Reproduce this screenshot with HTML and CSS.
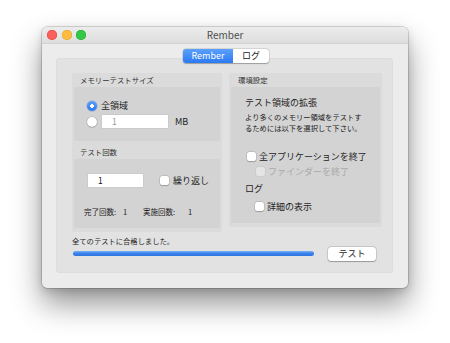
FILE: index.html
```html
<!DOCTYPE html>
<html lang="ja">
<head>
<meta charset="utf-8">
<title>Rember</title>
<link rel="stylesheet" href="styles.css">
</head>
<body>
<div class="stage">
<div class="window">
  <div class="titlebar">
    <div class="lights">
      <span class="light red"></span><span class="light yellow"></span><span class="light green"></span>
    </div>
    <div class="title">Rember</div>
    <div></div>
  </div>
  <div class="content">
    <div class="tabs">
      <span class="tab tab-main active">Rember</span><span class="tab tab-log">ログ</span>
    </div>
    <div class="panel">
      <div class="columns">
        <div class="col">
          <div class="group">
            <div class="group-label">メモリーテストサイズ</div>
            <div class="group-body size-body">
              <div class="row"><span class="radio on"></span><span class="lbl">全領域</span></div>
              <div class="row"><span class="radio"></span><span class="field field-mb">1</span><span class="unit">MB</span></div>
            </div>
          </div>
          <div class="group">
            <div class="group-label">テスト回数</div>
            <div class="group-body count-body">
              <div class="row"><span class="field field-count">1</span><span class="check repeat-check"></span><span class="lbl">繰り返し</span></div>
              <div class="stats"><span>完了回数:</span><span>1</span><span>実施回数:</span><span>1</span></div>
            </div>
          </div>
        </div>
        <div class="group env">
          <div class="group-label">環境設定</div>
          <div class="group-body env-body">
            <div class="env-title">テスト領域の拡張</div>
            <div class="env-desc">より多くのメモリー領域をテストす<br>るためには以下を選択して下さい。</div>
            <div class="row cb-row cb-quit"><span class="check"></span><span class="lbl">全アプリケーションを終了</span></div>
            <div class="row cb-row cb-finder disabled"><span class="check"></span><span class="lbl">ファインダーを終了</span></div>
            <div class="env-log">ログ</div>
            <div class="row cb-row cb-detail"><span class="check"></span><span class="lbl">詳細の表示</span></div>
          </div>
        </div>
      </div>
      <div class="status">全てのテストに合格しました。</div>
      <div class="run-row">
        <div class="progress"></div>
        <button class="btn">テスト</button>
      </div>
    </div>
  </div>
</div>
</div>
</body>
</html>
```

FILE: styles.css
```css
* { box-sizing: border-box; }
html, body { margin: 0; padding: 0; background: #fff; }
body {
  font-family: "Noto Sans CJK JP", "Noto Sans", sans-serif;
  color: #222;
}
.stage {
  width: 450px;
  height: 343px;
  padding: 27px 0 0 42px;
  background: #fff;
}
.window {
  width: 366px;
  height: 261px;
  background: #ececec;
  border-radius: 5px;
  box-shadow: 0 16px 30px rgba(0,0,0,0.42), 0 3px 8px rgba(0,0,0,0.14), 0 0 0 0.5px rgba(0,0,0,0.28);
  display: flex;
  flex-direction: column;
}
.titlebar {
  height: 17px;
  flex: none;
  display: grid;
  grid-template-columns: 1fr auto 1fr;
  align-items: center;
  background: linear-gradient(#ececec, #dedede);
  border-bottom: 1px solid #d2d2d2;
  border-radius: 5px 5px 0 0;
}
.lights { display: flex; gap: 4.5px; padding-left: 5px; }
.light { width: 10px; height: 10px; border-radius: 50%; }
.red { background: #fc605c; box-shadow: inset 0 0 0 0.5px #e0443e; }
.yellow { background: #fdbc40; box-shadow: inset 0 0 0 0.5px #dea123; }
.green { background: #34c84a; box-shadow: inset 0 0 0 0.5px #1dad2b; }
.title { font-size: 10px; line-height: 16px; color: #4d4d4d; }

.content {
  flex: 1;
  padding: 5px 15px 15px 14px;
  display: flex;
  flex-direction: column;
}
.tabs {
  align-self: center;
  margin-left: 3px;
  display: flex;
  position: relative;
  z-index: 1;
  height: 14px;
  border-radius: 3px;
  background: #fff;
  box-shadow: 0 0 0 0.5px rgba(0,0,0,0.15), 0 0.5px 1px rgba(0,0,0,0.25);
  overflow: hidden;
}
.tab { font-size: 9px; line-height: 14px; text-align: center; color: #222; }
.tab-main { width: 50px; }
.tab-log { width: 36px; }
.tab.active { background: linear-gradient(#5ba0fb, #2c7af1); color: #fff; }

.panel {
  margin-top: -5px;
  flex: 1;
  background: #e2e2e2;
  border-radius: 4px;
  box-shadow: inset 0 0 0 0.5px #d8d8d8;
  padding: 15px 11px 0 16px;
  display: flex;
  flex-direction: column;
}
.columns {
  display: grid;
  grid-template-columns: 150px 153px;
  gap: 7px;
  align-items: start;
}
.col { display: flex; flex-direction: column; }
.group { background: #dbdbdb; padding: 0 2px 4px; border-radius: 2px; }
.group-label { font-size: 7.4px; line-height: 14px; padding-left: 6px; color: #333; }
.env .group-label { padding-left: 7px; }
.group-body { background: #d3d3d3; border-radius: 1px; }

.row { display: flex; align-items: center; height: 13px; }
.lbl { font-size: 9px; line-height: 13px; color: #1e1e1e; }

.size-body { height: 54px; padding: 12px 0 0 13px; display: flex; flex-direction: column; gap: 3px; }
.size-body .radio { margin-right: 4px; }
.size-body .radio:not(.on) { margin-right: 5px; }
.radio {
  width: 10px; height: 10px; border-radius: 50%; flex: none;
  background: #fff;
  box-shadow: 0 0 0 0.5px rgba(0,0,0,0.18), 0 0.5px 1px rgba(0,0,0,0.22);
}
.radio.on {
  background: radial-gradient(circle, #fff 0 1.6px, transparent 2.1px), linear-gradient(#5ba0fb, #2c7af1);
  box-shadow: 0 0 0 0.5px rgba(30,90,200,0.4);
}
.field {
  height: 13px;
  background: #fff;
  box-shadow: 0 0 0 0.5px #c4c4c4;
  font-size: 8.5px;
  line-height: 13px;
  padding-left: 10px;
  flex: none;
}
.field-mb { width: 66px; color: #9a9a9a; }
.unit { margin-left: 7px; font-size: 9px; line-height: 13px; color: #222; }

.count-body { height: 69px; padding: 14.5px 0 0 14px; }
.field-count { width: 55px; color: #111; }
.check {
  width: 9px; height: 9px; border-radius: 2px; flex: none;
  background: #fff;
  box-shadow: 0 0 0 0.5px rgba(0,0,0,0.15), 0 0.5px 1px rgba(0,0,0,0.2);
  margin-right: 4px;
}
.repeat-check { margin-left: 17px; }
.stats {
  margin-top: 19px;
  margin-left: -4px;
  display: grid;
  grid-template-columns: 39px 20px 45px auto;
  font-size: 7.5px;
  line-height: 11px;
  color: #222;
}

.env-body { height: 136px; padding: 10px 0 0 14px; }
.env-title { font-size: 9px; line-height: 12px; color: #1e1e1e; }
.env-desc { margin-top: 3px; font-size: 7.3px; line-height: 11px; color: #222; }
.cb-row .check { margin-right: 3px; }
.cb-quit { margin-top: 16px; margin-left: 2px; }
.cb-finder { margin-top: 2px; margin-left: 11px; }
.cb-detail { margin-top: 5px; margin-left: 10px; }
.disabled .check { background: #e4e4e4; box-shadow: 0 0 0 0.5px rgba(0,0,0,0.07); }
.disabled .lbl { color: #a9a9a9; }
.env-log { margin-top: 5px; font-size: 9px; line-height: 12px; color: #1e1e1e; }

.status { margin-top: 3.5px; font-size: 7.3px; line-height: 11px; color: #222; }
.run-row {
  display: flex;
  align-items: center;
  gap: 14px;
  height: 14px;
  padding: 0 6px 0 1px;
}
.progress {
  flex: 1;
  height: 5px;
  border-radius: 3px;
  background: linear-gradient(#7cb2f7, #3d83ec 45%, #2f74e2);
}
.btn {
  width: 48px;
  height: 14px;
  padding: 0;
  border: none;
  border-radius: 3px;
  background: #fff;
  box-shadow: 0 0 0 0.5px rgba(0,0,0,0.2), 0 0.5px 1px rgba(0,0,0,0.25);
  font-family: inherit;
  font-size: 9px;
  line-height: 14px;
  color: #222;
}
```
